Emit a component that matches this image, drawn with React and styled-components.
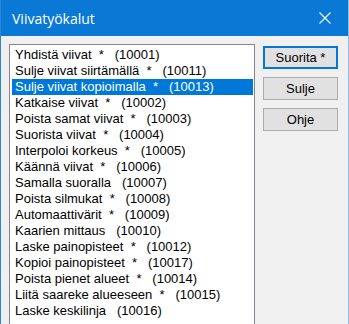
import React, { useState } from 'react'
import styled, { createGlobalStyle } from 'styled-components'

const tools = [
    ['Yhdistä viivat  *   ', '10001'],
    ['Sulje viivat siirtämällä  *   ', '10011'],
    ['Sulje viivat kopioimalla  *   ', '10013'],
    ['Katkaise viivat  *   ', '10002'],
    ['Poista samat viivat  *   ', '10003'],
    ['Suorista viivat  *   ', '10004'],
    ['Interpoloi korkeus  *   ', '10005'],
    ['Käännä viivat  *   ', '10006'],
    ['Samalla suoralla   ', '10007'],
    ['Poista silmukat  *   ', '10008'],
    ['Automaattivärit  *   ', '10009'],
    ['Kaarien mittaus   ', '10010'],
    ['Laske painopisteet  *   ', '10012'],
    ['Kopioi painopisteet  *   ', '10017'],
    ['Poista pienet alueet  *   ', '10014'],
    ['Liitä saareke alueeseen  *   ', '10015'],
    ['Laske keskilinja   ', '10016'],
]

function App() {
    const [selected, setSelected] = useState(2)

    return (
        <>
            <GlobalStyle />
            <Window>
                <TitleBar>
                    <Title>Viivatyökalut</Title>
                    <CloseButton aria-label="Sulje">
                        <svg width="12" height="12" viewBox="0 0 12 12">
                            <path d="M0.5 0.5 L11.5 11.5 M11.5 0.5 L0.5 11.5" stroke="#fff" strokeWidth="1.1" fill="none" />
                        </svg>
                    </CloseButton>
                </TitleBar>

                <Body>
                    <ListBox>
                        {tools.map(([name, code], i) => (
                            <Item
                                key={code}
                                $active={i === selected}
                                onClick={() => setSelected(i)}
                            >
                                {name}({code})
                            </Item>
                        ))}
                    </ListBox>

                    <Buttons>
                        <Button $default>Suorita *</Button>
                        <Button>Sulje</Button>
                        <Button>Ohje</Button>
                    </Buttons>
                </Body>
            </Window>
        </>
    )
}

export default App

const GlobalStyle = createGlobalStyle`
    html, body {
        margin: 0;
        padding: 0;
        background: #f0f0f0;
    }
`

const Window = styled.div`
    width: 349px;
    height: 324px;
    box-sizing: border-box;
    border-left: 1px solid #2b86d6;
    border-right: 1px solid #8cbfee;
    background: #f0f0f0;
    overflow: hidden;
    display: flex;
    flex-direction: column;
    font-family: 'Liberation Sans', Arial, sans-serif;
`

const TitleBar = styled.div`
    height: 36px;
    flex: none;
    background: #0a78d5;
    display: flex;
    align-items: center;
    justify-content: space-between;
    padding: 0 17px 0 11px;
`

const Title = styled.span`
    color: #fff;
    font-family: 'Open Sans', 'Noto Sans', sans-serif;
    font-size: 14px;
`

const CloseButton = styled.button`
    border: none;
    background: transparent;
    padding: 0;
    display: flex;
    cursor: pointer;
`

const Body = styled.div`
    flex: 1;
    display: flex;
    gap: 8px;
    padding: 8px 9px 0 8px;
`

const ListBox = styled.div`
    width: 246px;
    box-sizing: border-box;
    border: 1px solid #828790;
    border-bottom: none;
    background: #fff;
    padding: 2px 1px 0 2px;
    display: flex;
    flex-direction: column;
`

const Item = styled.div`
    height: 16px;
    line-height: 16px;
    padding-left: 3px;
    font-size: 13px;
    white-space: pre;
    color: ${p => (p.$active ? '#fff' : '#000')};
    background: ${p => (p.$active ? '#0078d7' : 'transparent')};
    cursor: default;
`

const Buttons = styled.div`
    display: flex;
    flex-direction: column;
    gap: 8px;
    padding-top: 2px;
`

const Button = styled.button`
    width: 75px;
    height: 23px;
    box-sizing: border-box;
    background: #e1e1e1;
    border: ${p => (p.$default ? '2px solid #0078d7' : '1px solid #adadad')};
    font-family: 'Liberation Sans', Arial, sans-serif;
    font-size: 13px;
    color: #000;
    padding: 0;
`
